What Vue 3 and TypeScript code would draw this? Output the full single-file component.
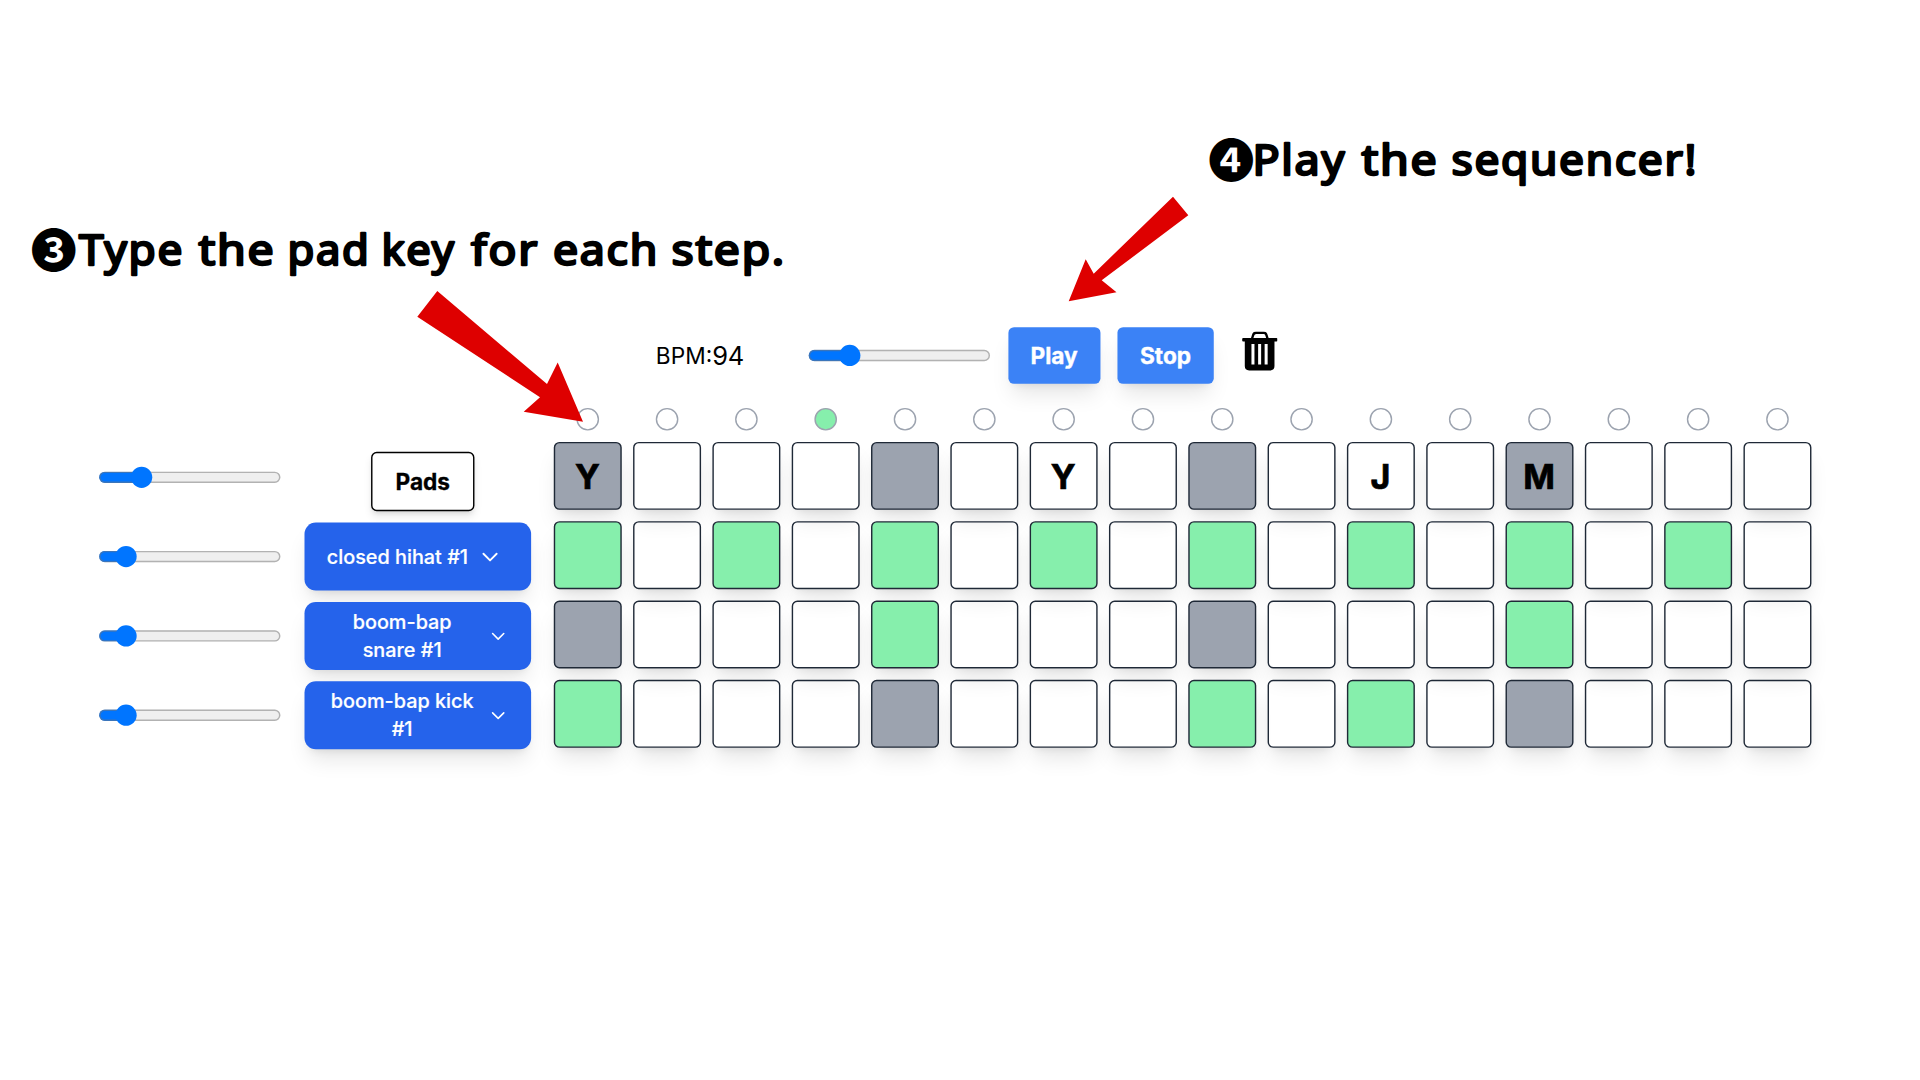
<script setup lang="ts">
import { ref } from 'vue'

interface Track {
  volume: number
  instrument: string
  wrap: boolean
  steps: string
}

const bpm = ref(94)
const currentStep = 3
const stepCount = 16
const masterVolume = ref(20)
const padKeys: string[] = ['Y', '', '', '', '', '', 'Y', '', '', '', 'J', '', 'M', '', '', '']

const tracks = ref<Track[]>([
  { volume: 10, instrument: 'closed hihat #1', wrap: false, steps: 'x.x.x.x.x.x.x.x.' },
  { volume: 10, instrument: 'boom-bap snare #1', wrap: true, steps: '....x.......x...' },
  { volume: 10, instrument: 'boom-bap kick #1', wrap: true, steps: 'x.......x.x.....' },
])

const isBeat = (index: number): boolean => index % 4 === 0

interface Word { text: string; x: number; width: number }
const captions: { mark: string; markX: number; y: number; words: Word[] }[] = [
  {
    mark: '❸', markX: 53.8, y: 265,
    words: [
      { text: 'Type', x: 79, width: 105 },
      { text: 'the', x: 198.5, width: 77 },
      { text: 'pad', x: 287.5, width: 83 },
      { text: 'key', x: 381.5, width: 74 },
      { text: 'for', x: 471, width: 68 },
      { text: 'each', x: 553, width: 106 },
      { text: 'step.', x: 671.5, width: 114.5 },
    ],
  },
  {
    mark: '❹', markX: 1231.2, y: 175,
    words: [
      { text: 'Play', x: 1252.5, width: 93.5 },
      { text: 'the', x: 1361.5, width: 77 },
      { text: 'sequencer!', x: 1451.5, width: 246.5 },
    ],
  },
]
</script>

<template>
  <main class="stage">
    <div class="board">
      <div class="controls">
        <div class="bpm"><span>BPM:</span><span class="bpm-value">{{ bpm }}</span></div>
        <input v-model.number="bpm" class="range" type="range" min="60" max="240" />
        <button class="btn play">Play</button>
        <button class="btn stop">Stop</button>
        <svg class="trash" viewBox="428 66 106 118">
          <path fill="none" stroke="#000" stroke-width="7" d="M457 90l4-13q2-7 9-7h22q7 0 9 7l4 13" />
          <rect x="428" y="86" width="106" height="10" rx="3" />
          <path fill-rule="evenodd" d="M436 94h89v76q0 13-13 13h-63q-13 0-13-13zM456 104v61h9v-61zM476 104v61h9v-61zM495.500 104v61h9v-61z" />
        </svg>
      </div>

      <div class="lights">
        <span v-for="n in stepCount" :key="n" class="slot">
          <i class="light" :class="{ on: n - 1 === currentStep }"></i>
        </span>
      </div>

      <div class="row">
        <input v-model.number="masterVolume" class="range" type="range" />
        <div class="label"><button class="pads">Pads</button></div>
        <div class="cells">
          <div v-for="(key, i) in padKeys" :key="i" class="cell" :class="{ beat: isBeat(i) }">{{ key }}</div>
        </div>
      </div>

      <div v-for="track in tracks" :key="track.instrument" class="row">
        <input v-model.number="track.volume" class="range" type="range" />
        <div class="label">
          <button class="select">
            <span :class="{ wrap: track.wrap }">{{ track.instrument }}</span>
            <svg class="chevron" :class="{ small: track.wrap }" viewBox="0 0 24 24">
              <path d="M19 9l-7 7-7-7" />
            </svg>
          </button>
        </div>
        <div class="cells">
          <div
            v-for="(step, i) in track.steps.split('')"
            :key="i"
            class="cell"
            :class="{ beat: isBeat(i), active: step === 'x' }"
          ></div>
        </div>
      </div>
    </div>

    <svg class="guide" viewBox="0 0 1920 1080">
      <g v-for="caption in captions" :key="caption.mark">
        <text class="mark" :x="caption.markX" :y="caption.y + 1.5" text-anchor="middle">{{ caption.mark }}</text>
        <text
          v-for="word in caption.words"
          :key="word.text"
          class="word"
          :x="word.x"
          :y="caption.y"
          :textLength="word.width"
          lengthAdjust="spacingAndGlyphs"
        >{{ word.text }}</text>
      </g>
      <path class="arrow" d="M437.300 291L547 384L557.700 362.500L583 421.700L523.700 411.700L540 397.300L417.300 316.700Z" />
      <path class="arrow" d="M1173 196.700L1188.300 215.300L1101.700 280.300L1116.500 292.300L1068.700 301.300L1085.700 259.300L1093.700 273.700Z" />
    </svg>
  </main>
</template>

<style>
body {
  background: #fff;
  overflow: hidden;
}
</style>

<style scoped>
.stage {
  position: relative;
  width: 1920px;
  height: 1080px;
  overflow: hidden;
  font-family: Inter, 'Liberation Sans', sans-serif;
  color: #000;
}
.board {
  box-sizing: border-box;
  width: 1355px;
  height: 762px;
  padding: 231px 0 0 69.4px;
  transform: scale(1.4163);
  transform-origin: 0 0;
}
.controls {
  display: flex;
  height: 40px;
  padding-left: 393.7px;
}
.bpm {
  display: flex;
  align-items: center;
  width: 107.2px;
  font-size: 16px;
}
.bpm-value {
  font-size: 18px;
  letter-spacing: -0.2px;
}
.range {
  width: 129.5px;
  height: 16px;
  margin: 0;
  flex: none;
}
.controls .range {
  margin: 12px 12px 0 0;
}
button {
  margin: 0;
  font-family: inherit;
}
.btn {
  height: 40px;
  padding: 0;
  border: 0;
  border-radius: 4px;
  background: #3b82f6;
  color: #fff;
  font-size: 16px;
  font-weight: 700;
  -webkit-text-stroke: 0.25px #fff;
  box-shadow: 0 10px 15px -3px rgb(0 0 0 / 0.1), 0 4px 6px -4px rgb(0 0 0 / 0.1);
}
.play {
  width: 65px;
  margin-right: 12px;
}
.stop {
  width: 68.4px;
  margin-right: 19.8px;
}
.trash {
  width: 25px;
  height: 27.8px;
  margin-top: 3.2px;
}
.lights {
  display: flex;
  gap: 8px;
  margin-top: 17px;
  padding-left: 321.3px;
}
.slot {
  display: flex;
  justify-content: center;
  width: 48px;
}
.light {
  box-sizing: border-box;
  width: 16px;
  height: 16px;
  border: 1px solid #9ca3af;
  border-radius: 50%;
}
.light.on {
  background: #86efac;
}
.row {
  display: flex;
  align-items: center;
  height: 48px;
  margin-top: 8px;
}
.row .range {
  margin-top: 2.6px;
}
.label {
  display: flex;
  justify-content: center;
  width: 160px;
  margin: 2px 16px 0 15.8px;
}
.pads {
  width: 73px;
  height: 42px;
  margin-top: 6px;
  margin-left: 7.6px;
  padding: 0;
  border: 1px solid #000;
  border-radius: 4px;
  background: #fff;
  color: #000;
  font-size: 16px;
  font-weight: 700;
  -webkit-text-stroke: 0.2px #000;
  box-shadow: 0 4px 6px -1px rgb(0 0 0 / 0.1), 0 2px 4px -2px rgb(0 0 0 / 0.1);
}
.select {
  display: flex;
  align-items: center;
  width: 160px;
  height: 48px;
  padding: 0 16px;
  border: 0;
  border-radius: 8px;
  background: #2563eb;
  color: #fff;
  font-size: 14px;
  font-weight: 500;
  line-height: 20px;
  -webkit-text-stroke: 0.15px #fff;
  box-shadow: 0 10px 15px -3px rgb(0 0 0 / 0.1), 0 4px 6px -4px rgb(0 0 0 / 0.1);
}
.wrap {
  width: 106.5px;
}
.chevron {
  flex: none;
  width: 16px;
  height: 16px;
  margin-left: 8px;
  fill: none;
  stroke: #fff;
  stroke-width: 2;
  stroke-linecap: round;
  stroke-linejoin: round;
}
.chevron.small {
  width: 13.500px;
}
.cells {
  display: flex;
  gap: 8px;
}
.cell {
  box-sizing: border-box;
  display: flex;
  align-items: center;
  justify-content: center;
  width: 48px;
  height: 48px;
  border: 1px solid #1f2937;
  border-radius: 4px;
  font-size: 24px;
  font-weight: 700;
  -webkit-text-stroke: 0.5px #000;
  box-shadow: 0 10px 15px -3px rgb(0 0 0 / 0.1), 0 4px 6px -4px rgb(0 0 0 / 0.1);
}
.cell.beat {
  background: #9ca3af;
}
.cell.active {
  background: #86efac;
}
.guide {
  position: absolute;
  inset: 0;
  width: 1920px;
  height: 1080px;
}
.mark {
  font: 700 46px 'Noto Sans CJK JP', sans-serif;
}
.word {
  font: 400 42.5px 'Noto Sans', sans-serif;
  letter-spacing: 1.6px;
  stroke: #000;
  stroke-width: 2.4px;
  stroke-linejoin: round;
}
.arrow {
  fill: #de0000;
}
</style>
